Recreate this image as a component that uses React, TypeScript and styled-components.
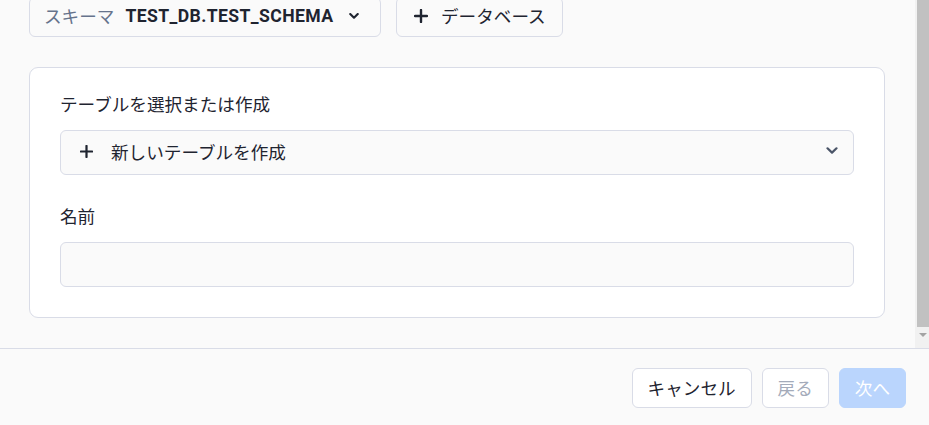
import React from 'react';
import styled, { createGlobalStyle } from 'styled-components';

const GlobalStyle = createGlobalStyle`
  html, body {
    margin: 0;
    padding: 0;
    background: #fafafa;
  }
  body {
    font-family: Roboto, "Noto Sans CJK JP", sans-serif;
    color: #1f2430;
  }
  * {
    box-sizing: border-box;
  }
`;

const PlusIcon: React.FC<{ size?: number }> = ({ size = 14 }) => (
    <svg width={size} height={size} viewBox="0 0 14 14" fill="none">
        <path d="M7 1v12M1 7h12" stroke="#1f2430" strokeWidth="2.4" strokeLinecap="round" />
    </svg>
);

const ChevronDown: React.FC<{ width: number; color: string; weight: number }> = ({ width, color, weight }) => (
    <svg width={width} height={width * 0.6} viewBox="0 0 12 7" fill="none">
        <path d="M1.5 1.2L6 5.5l4.5-4.3" stroke={color} strokeWidth={weight} strokeLinecap="round" strokeLinejoin="round" />
    </svg>
);

const App: React.FC = () => {
    return (
        <>
            <GlobalStyle />
            <Page>
                <Body>
                    <Content>
                        <Toolbar>
                            <SchemaButton>
                                <SchemaLabel>スキーマ</SchemaLabel>
                                <SchemaValue>TEST_DB.TEST_SCHEMA</SchemaValue>
                                <ChevronDown width={10} color="#1f2430" weight={2.6} />
                            </SchemaButton>
                            <AddButton>
                                <PlusIcon />
                                データベース
                            </AddButton>
                        </Toolbar>
                        <Card>
                            <Field>
                                <FieldLabel>テーブルを選択または作成</FieldLabel>
                                <Select>
                                    <SelectValue>
                                        <PlusIcon size={13} />
                                        新しいテーブルを作成
                                    </SelectValue>
                                    <ChevronDown width={12} color="#4b5568" weight={2.2} />
                                </Select>
                            </Field>
                            <Field>
                                <FieldLabel>名前</FieldLabel>
                                <Input />
                            </Field>
                        </Card>
                    </Content>
                    <Scrollbar>
                        <Thumb />
                        <ArrowDown />
                    </Scrollbar>
                </Body>
                <Footer>
                    <FooterButton>キャンセル</FooterButton>
                    <FooterButton disabled>戻る</FooterButton>
                    <PrimaryButton disabled>次へ</PrimaryButton>
                </Footer>
            </Page>
        </>
    );
};

const Page = styled.div`
  display: flex;
  flex-direction: column;
  width: 929px;
  height: 425px;
  overflow: hidden;
`;

const Body = styled.div`
  display: flex;
  height: 348px;
`;

const Content = styled.div`
  flex: 1;
  display: flex;
  flex-direction: column;
  justify-content: flex-end;
  overflow: hidden;
  padding: 0 30px 30px 29px;
`;

const Toolbar = styled.div`
  display: flex;
  gap: 15px;
  margin-bottom: 30px;
  flex-shrink: 0;
`;

const BaseButton = styled.button`
  display: flex;
  align-items: center;
  height: 40px;
  background: #fff0;
  border: 1px solid #d9dce7;
  border-radius: 6px;
  font-family: Roboto, "Noto Sans CJK JP", sans-serif;
  font-size: 17.6px;
  color: #1f2430;
  cursor: pointer;
`;

const SchemaButton = styled(BaseButton)`
  width: 352px;
  padding: 0 20px 3px 14px;
  background: #fafafa;
`;

const SchemaLabel = styled.span`
  color: #66738c;
  margin-right: 11px;
`;

const SchemaValue = styled.span`
  font-weight: 700;
  letter-spacing: 0.4px;
  margin-right: 15px;
`;

const AddButton = styled(BaseButton)`
  width: 167px;
  padding: 0 16px 3px 17px;
  gap: 13px;
  background: #fafafa;
`;

const Card = styled.div`
  flex-shrink: 0;
  display: flex;
  flex-direction: column;
  gap: 30px;
  background: #fff;
  border: 1px solid #d9dce7;
  border-radius: 9px;
  padding: 25px 30px 30px;
`;

const Field = styled.div`
  display: flex;
  flex-direction: column;
`;

const FieldLabel = styled.label`
  font-size: 17.6px;
  line-height: 24px;
  margin-bottom: 13px;
  color: #1f2430;
`;

const Select = styled.div`
  display: flex;
  align-items: center;
  justify-content: space-between;
  height: 45px;
  padding: 0 15px 3px 19px;
  background: #fafafa;
  border: 1px solid #d9dce7;
  border-radius: 6px;
`;

const SelectValue = styled.div`
  display: flex;
  align-items: center;
  gap: 18px;
  font-size: 17.6px;
  color: #1f2430;
`;

const Input = styled.input`
  height: 45px;
  background: #fafafa;
  border: 1px solid #d9dce7;
  border-radius: 6px;
  outline: none;
`;

const Scrollbar = styled.div`
  width: 14px;
  display: flex;
  flex-direction: column;
  background: #f1f1f1;
  padding-left: 2px;
`;

const Thumb = styled.div`
  flex: 1;
  background: #c1c1c1;
  margin-bottom: 5px;
`;

const ArrowDown = styled.div`
  height: 16px;
  display: flex;
  justify-content: center;
  padding-top: 1px;

  &::after {
    content: '';
    width: 0;
    height: 0;
    border-left: 4px solid transparent;
    border-right: 4px solid transparent;
    border-top: 4px solid #a3a3a3;
  }
`;

const Footer = styled.div`
  flex: 1;
  display: flex;
  justify-content: flex-end;
  align-items: flex-start;
  gap: 10px;
  border-top: 1px solid #d9dce7;
  padding: 19px 23px 0;
`;

const FooterButton = styled(BaseButton)`
  padding: 0 15px 2px;
  background: #fff;

  &:disabled {
    color: #a4abba;
    cursor: default;
  }
`;

const PrimaryButton = styled(BaseButton)`
  padding: 0 15px 2px;
  border-color: #bad5fd;
  background: #bad5fd;
  color: #fff;

  &:disabled {
    cursor: default;
  }
`;

export default App;
